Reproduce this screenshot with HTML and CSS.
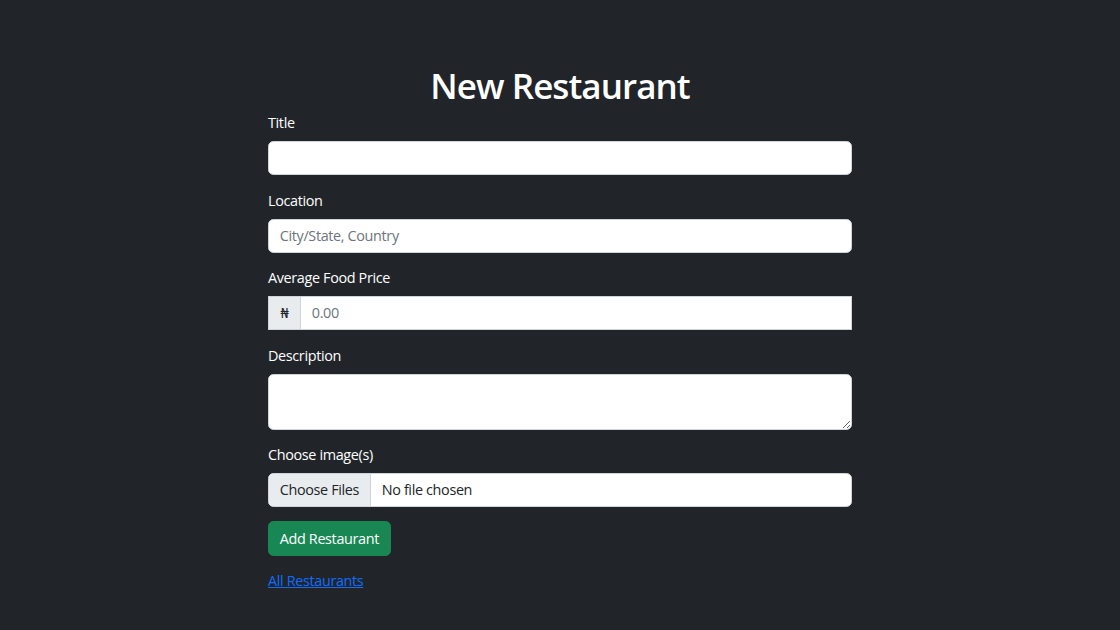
FILE: index.html
```html
<!DOCTYPE html>
<html lang="en">
<head>
<meta charset="utf-8">
<title>New Restaurant</title>
<link rel="stylesheet" href="styles.css">
</head>
<body>
<main class="page">
  <h1 class="heading">New Restaurant</h1>
  <form class="form">
    <div class="field">
      <label class="label" for="title">Title</label>
      <input class="control" id="title" type="text">
    </div>
    <div class="field">
      <label class="label" for="location">Location</label>
      <input class="control" id="location" type="text" placeholder="City/State, Country">
    </div>
    <div class="field">
      <label class="label" for="price">Average Food Price</label>
      <div class="group">
        <span class="group-text">₦</span>
        <input class="control group-control" id="price" type="text" placeholder="0.00">
      </div>
    </div>
    <div class="field">
      <label class="label" for="description">Description</label>
      <textarea class="control textarea" id="description" rows="2"></textarea>
    </div>
    <div class="field">
      <label class="label" for="images">Choose image(s)</label>
      <div class="file">
        <span class="file-button">Choose Files</span>
        <span class="file-name">No file chosen</span>
      </div>
    </div>
    <div class="field">
      <button class="btn" type="button">Add Restaurant</button>
    </div>
  </form>
  <a class="link" href="#">All Restaurants</a>
</main>
</body>
</html>
```

FILE: styles.css
```css
html {
  font-size: 14.4px;
}
body {
  margin: 0;
  background: #212529;
  color: #fff;
  font-family: "Open Sans", "Noto Sans", sans-serif;
  font-size: 1rem;
  line-height: 1.5;
  letter-spacing: -0.35px;
}
.page {
  width: 584px;
  margin: 0 auto;
  padding-top: 62px;
}
.heading {
  margin: 2px 0 5.2px;
  font-size: 35px;
  font-weight: 600;
  line-height: 43px;
  letter-spacing: -0.95px;
  text-align: center;
}
.form {
  margin: 0;
}
.field {
  margin-bottom: 1rem;
}
.label {
  display: block;
  margin-bottom: 0.5rem;
  font-size: 1rem;
}
.control {
  display: block;
  width: 100%;
  box-sizing: border-box;
  padding: 0.375rem 0.75rem;
  font-family: inherit;
  font-size: 1rem;
  line-height: 1.5;
  letter-spacing: inherit;
  color: #212529;
  background: #fff;
  border: 1px solid #ced4da;
  border-radius: 0.375rem;
  outline: none;
}
.control::placeholder {
  color: #6c757d;
  opacity: 1;
}
.textarea {
  height: 56px;
  resize: vertical;
}
.group {
  display: flex;
  align-items: stretch;
}
.group-text {
  display: flex;
  align-items: center;
  justify-content: center;
  width: 32px;
  box-sizing: border-box;
  font-size: 1rem;
  color: #212529;
  background: #e9ecef;
  border: 1px solid #ced4da;
  border-right: 0;
}
.group-control {
  flex: 1;
  border-radius: 0;
}
.file {
  display: flex;
  height: 34px;
  box-sizing: border-box;
  background: #fff;
  border: 1px solid #ced4da;
  border-radius: 0.375rem;
  overflow: hidden;
  color: #212529;
}
.file-button {
  display: flex;
  align-items: center;
  padding: 0 0.75rem;
  background: #e9ecef;
  border-right: 1px solid #ced4da;
}
.file-name {
  display: flex;
  align-items: center;
  padding: 0 0.75rem;
}
.btn {
  padding: 0.375rem 0.75rem;
  font-family: inherit;
  font-size: 1rem;
  line-height: 1.5;
  letter-spacing: inherit;
  color: #fff;
  background: #198754;
  border: 1px solid #198754;
  border-radius: 0.375rem;
}
.link {
  color: #0d6efd;
  text-decoration: underline;
  font-size: 1rem;
}
```
